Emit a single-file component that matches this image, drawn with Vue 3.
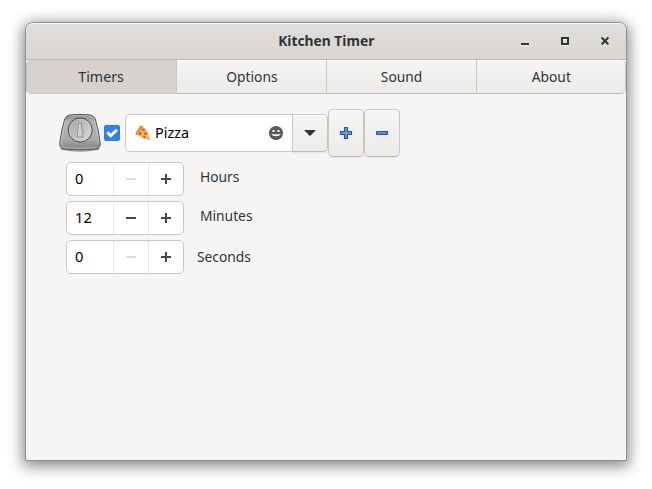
<script setup>
import { ref } from 'vue'

const tabs = ['Timers', 'Options', 'Sound', 'About']
const active = ref('Timers')
const enabled = ref(true)
const fields = ref([
  { label: 'Hours', value: 0, key: 'hours' },
  { label: 'Minutes', value: 12, key: 'minutes' },
  { label: 'Seconds', value: 0, key: 'seconds' },
])
</script>

<template>
  <main class="desktop">
    <section class="window">
      <header class="titlebar">
        <span></span>
        <h1><span class="t title">Kitchen Timer</span></h1>
        <div class="controls">
          <svg viewBox="0 0 16 16"><path d="M4 12h8" stroke="#fff" stroke-opacity=".7" stroke-width="2" /><path d="M4 11h8" stroke="#2e3436" stroke-width="2" /></svg>
          <svg viewBox="0 0 16 16"><path d="M5 6h6v6H5z" fill="none" stroke="#f7f6f5" stroke-width="2" /><path d="M5 5h6v6H5z" fill="none" stroke="#2e3436" stroke-width="2" /></svg>
          <svg viewBox="0 0 16 16"><path d="M4.6 5.6l6.8 6.8M11.4 5.6l-6.8 6.8" stroke="#f7f6f5" stroke-width="2" /><path d="M4.6 4.6l6.8 6.8M11.4 4.6l-6.8 6.8" stroke="#2e3436" stroke-width="2.1" /></svg>
        </div>
      </header>

      <nav class="tabs">
        <button v-for="tab in tabs" :key="tab" :class="{ active: active === tab }" @click="active = tab">
          <span class="t" :class="tab.toLowerCase()">{{ tab }}</span>
        </button>
      </nav>

      <div class="content">
        <div class="row">
          <svg class="dial" viewBox="0 0 44 40">
            <defs>
              <linearGradient id="metal" x1="0" y1="0" x2="0" y2="1">
                <stop offset="0" stop-color="#8c8c8c" />
                <stop offset=".25" stop-color="#b2b2b2" />
                <stop offset=".7" stop-color="#a8a8a8" />
                <stop offset="1" stop-color="#828282" />
              </linearGradient>
              <linearGradient id="face" x1="0" y1="0" x2="1" y2="1">
                <stop offset="0" stop-color="#a0a0a0" />
                <stop offset=".5" stop-color="#c0c0c0" />
                <stop offset="1" stop-color="#dadada" />
              </linearGradient>
            </defs>
            <path d="M3 35.5q19 4 38 0" fill="none" stroke="#444" stroke-opacity=".5" stroke-width="2.5" />
            <path d="M12 1.9Q22 .8 32 1.9Q36 2.5 37.3 6Q41 18 42.2 30Q42.7 35.3 38 36.1Q22 37.6 6 36.1Q1.3 35.3 1.8 30Q3 18 6.7 6Q8 2.5 12 1.9Z" fill="url(#metal)" stroke="#5a5a5a" stroke-width="1" />
            <path d="M12.5 3.1Q22 2 31.5 3.1Q35 3.6 36 6.5Q39.5 18 40.8 30" fill="none" stroke="#d5d5d5" stroke-opacity=".6" />
            <path d="M7.8 7Q4.5 18 3.2 30Q3.2 33.8 6.5 34.7Q22 36.1 37.5 34.7" fill="none" stroke="#d5d5d5" stroke-opacity=".55" />
            <circle cx="22.2" cy="17" r="12" fill="url(#face)" stroke="#484848" stroke-width="1" />
            <circle cx="22.2" cy="17" r="10.9" fill="none" stroke="#d8d8d8" stroke-opacity=".6" stroke-width=".8" />
            <path d="M20.8 10.4h2.8v5l1.2 2v6.6h-5.2v-6.6l1.2-2z" fill="#cacaca" stroke="#858585" stroke-width=".8" />
            <path d="M21.6 11.2v5l-1 2v5" fill="none" stroke="#e1e1e1" stroke-width=".9" />
          </svg>

          <button class="check" @click="enabled = !enabled">
            <svg v-if="enabled" viewBox="0 0 16 16"><path d="M3.4 7.5l3.3 3.3 6.3-6.1" fill="none" stroke="#fff" stroke-width="2.8" /></svg>
          </button>

          <div class="entry">
            <svg class="pizza" viewBox="0 0 16 16">
              <path d="M6 1.2Q11.5 3.6 13 8.4L15.6 15.6Q8 13.9 1.2 9.8Z" fill="#f6bd45" />
              <path d="M.9 9.5Q-.1 8.6 1 7.2Q2.7 4 5.1 1.1Q6.4-.1 8 .9Q8.9 1.7 7.6 2.7Q4.7 5.5 2.8 9.1Q1.8 10.2.9 9.5Z" fill="#d88932" />
              <path d="M1.4 8.2Q3 4.6 6 1.6" fill="none" stroke="#efaa55" stroke-width=".9" />
              <circle cx="8.6" cy="4.8" r="1.4" fill="#d94f5c" />
              <circle cx="5.2" cy="8.4" r="1.5" fill="#d94f5c" />
              <circle cx="10.6" cy="8.6" r="1.5" fill="#d94f5c" />
              <circle cx="9.4" cy="12" r="1.2" fill="#d94f5c" />
              <path d="M6.4 5.5l.8.6M12.6 12l.6.8" stroke="#a69a3c" stroke-width=".8" />
            </svg>
            <span class="t name">Pizza</span>
            <svg class="smile" viewBox="0 0 16 16">
              <circle cx="8" cy="8" r="7.1" fill="#555a5b" />
              <path d="M4.5 5h2v2h-2zM9.5 5h2v2h-2z" fill="#fff" />
              <path d="M3.2 8.9h9.6Q11.5 11.2 8 11.2T3.2 8.9" fill="#fff" />
              <path d="M5 9.6h6" stroke="#777b7c" stroke-width=".5" />
            </svg>
          </div>
          <button class="drop"><svg viewBox="0 0 16 16"><path d="M2 5h12L8.6 10.6q-.6.6-1.2 0z" fill="#2e3436" /></svg></button>
          <button class="tool">
            <svg viewBox="0 0 16 16"><path d="M6.5 2.5h3v4h4v3h-4v4h-3v-4h-4v-3h4z" fill="#7099cb" stroke="#25569c" stroke-linejoin="round" stroke-width="1.2" /></svg>
          </button>
          <button class="tool">
            <svg viewBox="0 0 16 16"><rect x="2.5" y="6.5" width="11" height="3" rx=".5" fill="#6490c8" stroke="#25569c" stroke-width="1.2" /></svg>
          </button>
        </div>

        <div class="fields">
          <div v-for="f in fields" :key="f.key" class="field">
            <div class="spin">
              <span class="value"><span class="t num">{{ f.value }}</span></span>
              <button :class="{ dim: f.value === 0 }" @click="f.value = Math.max(0, f.value - 1)">
                <svg viewBox="0 0 16 16"><path d="M3 8h10" /></svg>
              </button>
              <button @click="f.value++">
                <svg viewBox="0 0 16 16"><path d="M3 8h10M8 3v10" /></svg>
              </button>
            </div>
            <span class="t label" :class="f.key">{{ f.label }}</span>
          </div>
        </div>
      </div>
    </section>
  </main>
</template>

<style>
body { margin: 0; background: #fff; overflow: hidden; }
</style>

<style scoped>
* { box-sizing: border-box; }
.desktop {
  width: 652px; height: 489px; padding: 22px 25px;
  font: 15px/20px "Noto Sans", sans-serif; color: #2e3436; background: #fff;
}
button { margin: 0; padding: 0; border: 0; font: inherit; color: inherit; background: none; }
svg { display: block; width: 16px; height: 16px; flex: none; }
.t { display: inline-block; white-space: pre; transform: scaleX(.92); }
.window {
  width: 602px; height: 439px; border: 1px solid #8e8f8f; border-radius: 8px 8px 0 0;
  background: #f6f5f4; overflow: hidden;
  box-shadow: 0 3px 14px 2px rgba(0, 0, 0, .42), 0 4px 22px rgba(0, 0, 0, .1);
}
.titlebar {
  height: 37px; display: grid; grid-template-columns: 1fr auto 1fr; align-items: center;
  border-bottom: 1px solid #bfb8b1; border-radius: 7px 7px 0 0;
  background: linear-gradient(#e1dedb, #dad6d2); box-shadow: inset 0 1px #f9f8f8;
}
h1 { margin: 0; padding-bottom: 2px; font-size: 15px; font-weight: 700; line-height: 20px; }
.controls { display: flex; gap: 24px; justify-content: flex-end; padding-right: 13px; }
.tabs { height: 34px; display: grid; grid-template-columns: 151px 150px 150px 149px; }
.tabs button {
  display: flex; align-items: center; justify-content: center; padding-bottom: 2px;
  border: 1px solid #cdc7c2; border-width: 0 1px 1px 0; border-bottom-color: #bfb8b1;
  background: linear-gradient(#f6f5f4, #edebe9); box-shadow: inset 0 1px #fff;
}
.tabs button:first-child { border-left-width: 1px; border-radius: 5px 0 0 5px; }
.tabs button:last-child { border-radius: 0 5px 5px 0; }
.tabs .active { background: #d6d1cd; border-color: #cdc7c2; box-shadow: none; }
.tabs .timers { transform: scaleX(.95); }
.content { padding: 15px 0 0 32px; }
.row { display: flex; align-items: center; height: 48px; }
.dial { width: 44px; height: 40px; }
.check {
  width: 16px; height: 16px; margin: 0 5px 0 2px; border-radius: 3px;
  background: #3584e4; box-shadow: inset 0 0 0 1px #2b7be0;
}
.entry {
  width: 167px; height: 38px; display: flex; align-items: center; padding: 0 8px 0 9px;
  border: 1px solid #cdc7c2; border-right: 0; border-radius: 5px 0 0 5px; background: #fff; color: #000;
}
.pizza { margin-right: 4px; }
.name { padding-bottom: 2px; transform: scaleX(.96); transform-origin: 0 50%; }
.smile { margin-left: auto; }
.drop, .tool {
  width: 36px; display: flex; align-items: center; justify-content: center;
  border: 1px solid #cdc7c2; border-bottom-color: #bfb8b1;
  background: linear-gradient(#f6f5f4, #edebe9); box-shadow: inset 0 1px #fff, 0 1px 2px rgba(0, 0, 0, .07);
}
.drop { height: 38px; border-radius: 0 5px 5px 0; }
.tool { height: 48px; border-radius: 5px; }
.fields { display: grid; gap: 5px; padding: 5px 0 0 8px; }
.field { height: 34px; display: flex; align-items: center; }
.spin {
  width: 118px; height: 34px; display: grid; grid-template-columns: 1fr 35px 35px;
  border: 1px solid #cdc7c2; border-radius: 5px; background: #fff; color: #000;
}
.spin button { display: flex; align-items: center; justify-content: center; border-left: 1px solid #eceae8; }
.spin path { stroke: #434849; stroke-width: 2; }
.spin .dim path { stroke: #dfe0e0; }
.value { padding: 0 0 2px 8px; align-self: center; }
.num { transform: scaleX(.98); transform-origin: 0 50%; }
.label { margin-left: 16px; padding-bottom: 6px; transform-origin: 0 50%; }
.seconds { margin-left: 13px; padding-bottom: 2px; }
</style>
